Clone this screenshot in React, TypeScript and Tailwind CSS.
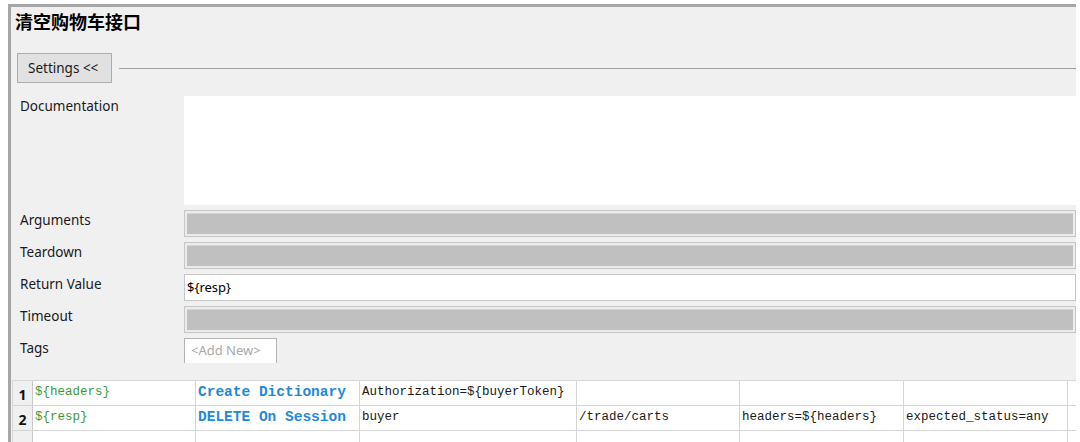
import React from "react";

const label = "text-[13.5px] leading-[18px] text-[#1a1a1a]";
const ui = { fontFamily: '"Noto Sans", "Noto Sans CJK SC", sans-serif' };
const mono = { fontFamily: '"Liberation Mono", "Noto Sans CJK SC", monospace' };

const GrayField = () => (
  <div className="flex-1 h-[27px] border border-[#c6c6ca] bg-[#ececec] p-[2px]">
    <div className="h-full bg-[#c0c0c0] border-t border-[#d4d4d8]" />
  </div>
);

const FieldRow = ({ name, children }: { name: string; children: React.ReactNode }) => (
  <div className="flex mt-[5px]">
    <div className={`w-[173px] pl-[9px] pt-[1px] ${label}`}>{name}</div>
    {children}
  </div>
);

const widths = ["w-[163px]", "w-[164px]", "w-[217px]", "w-[163px]", "w-[164px]", "w-[164px]"];

const rows = [
  ["${headers}", "Create Dictionary", "Authorization=${buyerToken}", "", "", ""],
  ["${resp}", "DELETE On Session", "buyer", "/trade/carts", "headers=${headers}", "expected_status=any"],
  ["", "", "", "", "", ""],
];

export default function App() {
  return (
    <div className="w-[1080px] h-[442px] overflow-hidden bg-white pl-[8px] pt-[4px]" style={ui}>
      <div className="w-[1068px] h-[438px] overflow-hidden border-l-[3px] border-t-[3px] border-[#a6a6a6] bg-[#f0f0f0]">
        <div
          className="h-[46px] pl-[4px] pt-[2px] text-[18px] leading-[24px] font-bold text-black"
          style={{ fontFamily: '"Noto Sans CJK SC", sans-serif' }}
        >
          清空购物车接口
        </div>

        <div className="flex items-center h-[30px]">
          <div className="ml-[6px] w-[95px] h-[30px] border border-[#adadad] bg-[#e1e1e1] flex items-center pl-[10px] text-[13.5px] text-[#1a1a1a]">
            Settings &lt;&lt;
          </div>
          <div className="flex-1 ml-[7px] h-px bg-[#a0a0a0]" />
        </div>

        <div className="flex mt-[13px]">
          <div className={`w-[173px] pl-[9px] pt-[1px] ${label}`}>Documentation</div>
          <div className="flex-1 h-[109px] bg-white" />
        </div>

        <FieldRow name="Arguments">
          <GrayField />
        </FieldRow>
        <FieldRow name="Teardown">
          <GrayField />
        </FieldRow>
        <FieldRow name="Return Value">
          <div className="flex-1 h-[27px] border border-[#c6c6c6] bg-white pl-[2px] flex items-center text-[13px] text-black">
            ${"{resp}"}
          </div>
        </FieldRow>
        <FieldRow name="Timeout">
          <GrayField />
        </FieldRow>
        <FieldRow name="Tags">
          <div className="w-[93px] h-[25px] border-t border-l border-r border-[#b4b4b4] bg-white flex items-center pl-[6px] text-[13px] text-[#a8a8a8]">
            &lt;Add New&gt;
          </div>
        </FieldRow>

        <div className="mt-[17px] ml-[1px] border-l border-t border-[#d8d8d8] bg-white">
          {rows.map((r, i) => (
            <div key={i} className="flex h-[25px] border-b border-[#d4d4d4]">
              <div className="w-[20px] shrink-0 bg-[#f0f0f0] border-r border-[#c8c8c8] flex items-center justify-center pt-[3px] text-[14px] leading-[18px] font-bold text-[#111]">
                {i < 2 ? i + 1 : ""}
              </div>
              {r.map((c, j) => (
                <div
                  key={j}
                  className={`${widths[j]} shrink-0 border-r border-[#d4d4d4] pl-[2px] pt-[3px] whitespace-nowrap overflow-hidden ${
                    j === 0
                      ? "text-[12.5px] leading-[16px] text-[#3a9a3a]"
                      : j === 1
                        ? "text-[14.5px] leading-[16px] font-bold text-[#1f8ad6]"
                        : "text-[12.5px] leading-[16px] text-[#1a1a1a]"
                  }`}
                  style={mono}
                >
                  {c}
                </div>
              ))}
              <div className="flex-1" />
            </div>
          ))}
        </div>
      </div>
    </div>
  );
}
